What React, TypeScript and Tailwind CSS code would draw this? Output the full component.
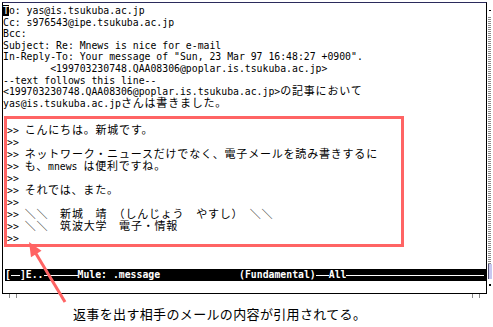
import React from "react";

const mono = "font-['DejaVu_Sans_Mono',monospace] text-[9.8px]";
const cjk = "font-['Noto_Sans_CJK_JP',sans-serif] text-[11px] tracking-[0.8px]";

function Txt({ s }: { s: string }) {
  const parts = s.match(/[\x00-\x7f]+|[^\x00-\x7f]+/g) ?? [];
  return (
    <>
      {parts.map((p, i) =>
        /^[\x00-\x7f]/.test(p) ? (
          <span key={i} className={mono}>
            {p}
          </span>
        ) : (
          <span key={i} className={cjk}>
            {p}
          </span>
        )
      )}
    </>
  );
}

const headers = [
  "Cc: s976543@ipe.tsukuba.ac.jp",
  "Bcc:",
  "Subject: Re: Mnews is nice for e-mail",
  'In-Reply-To: Your message of "Sun, 23 Mar 97 16:48:27 +0900".',
  "        <199703230748.QAA08306@poplar.is.tsukuba.ac.jp>",
  "--text follows this line--",
  "<199703230748.QAA08306@poplar.is.tsukuba.ac.jp>の記事において",
  "yas@is.tsukuba.ac.jpさんは書きました。",
];

const quotes = [
  ">> こんにちは。新城です。",
  ">>",
  ">> ネットワーク・ニュースだけでなく、電子メールを読み書きするに",
  ">> も、mnews は便利ですね。",
  ">>",
  ">> それでは、また。",
  ">>",
  ">> ＼＼　新城　靖　（しんじょう　やすし）　＼＼",
  ">> ＼＼　筑波大学　電子・情報",
  ">>",
];

export default function App() {
  return (
    <div className="relative w-[493px] h-[327px] bg-white overflow-hidden text-black">
      <div className="pt-[2px] flex">
        <div className="ml-[2px] w-[485px] h-[292px] border border-black border-t-[#2b2b5c] flex flex-col">
          <div className="flex flex-col">
            <div className="h-[11.6px] leading-[11.6px] whitespace-pre">
              <span className={`${mono} bg-black text-white`}>T</span>
              <Txt s="o: yas@is.tsukuba.ac.jp" />
            </div>
            {headers.map((h, i) => (
              <div key={i} className="h-[11.6px] leading-[11.6px] whitespace-pre">
                <Txt s={h} />
              </div>
            ))}
          </div>
          <div className="mt-[9px] ml-[1px] w-[400px] border-[3px] border-[#ff6464] pt-[3px] pb-[2px] flex flex-col">
            {quotes.map((q, i) => (
              <div key={i} className="h-[12px] leading-[12px] whitespace-pre">
                <Txt s={q} />
              </div>
            ))}
          </div>
          <div className="flex-1" />
          <div className="ml-[2px] h-[12px] bg-black text-white flex items-center whitespace-pre font-bold font-['DejaVu_Sans_Mono',monospace] text-[9.8px] leading-[12px]">
            <span>[</span>
            <div className="w-[9px] h-px bg-white" />
            <span>]E..</span>
            <div className="w-[34px] h-px bg-white" />
            <span>Mule: .message</span>
            <div className="w-[79px]" />
            <span>(Fundamental)</span>
            <div className="w-[13px] h-px bg-white" />
            <span>All</span>
            <div className="flex-1 h-px bg-white mr-[2px]" />
          </div>
          <div className="h-[12px]" />
        </div>
        <div className="w-[5px] h-[292px] flex flex-col">
          <div className="h-[15px] relative">
            <div className="mt-[8px] ml-[2px] w-[2px] h-px bg-black" />
          </div>
          <div className="flex-1 ml-[1px] w-[3px] bg-[repeating-linear-gradient(0deg,#8a8a8a_0px,#8a8a8a_1px,#ffffff_1px,#ffffff_2px)]" />
          <div className="h-[15px] ml-[1px] w-[4px] bg-[#c8c8f0] border-l border-[#555577]" />
          <div className="h-[15px]">
            <div className="mt-[5px] ml-[2px] w-[2px] h-[2px] bg-black" />
          </div>
        </div>
      </div>
      <div className="flex w-[489px] h-[5px] justify-between px-[9px]">
        <div className="flex gap-[6px]">
          <div className="w-px h-[4px] bg-[#888]" />
          <div className="w-px h-[4px] bg-[#888]" />
        </div>
        <div className="flex gap-[6px]">
          <div className="w-px h-[4px] bg-[#888]" />
          <div className="w-px h-[4px] bg-[#888]" />
        </div>
      </div>
      <div className="mt-[7px] ml-[73px] h-[16px] leading-[16px] whitespace-pre font-['Noto_Sans_CJK_JP',sans-serif] text-[13px] tracking-[0.35px]">
        返事を出す相手のメールの内容が引用されてる。
      </div>
      <svg
        className="absolute left-0 top-0 pointer-events-none"
        width="493"
        height="327"
        viewBox="0 0 493 327"
      >
        <line x1="65" y1="302" x2="35" y2="252" stroke="#ff6464" strokeWidth="3" />
        <polygon points="29,242 41.5,250.8 31,257.2" fill="#ff6464" />
      </svg>
    </div>
  );
}
